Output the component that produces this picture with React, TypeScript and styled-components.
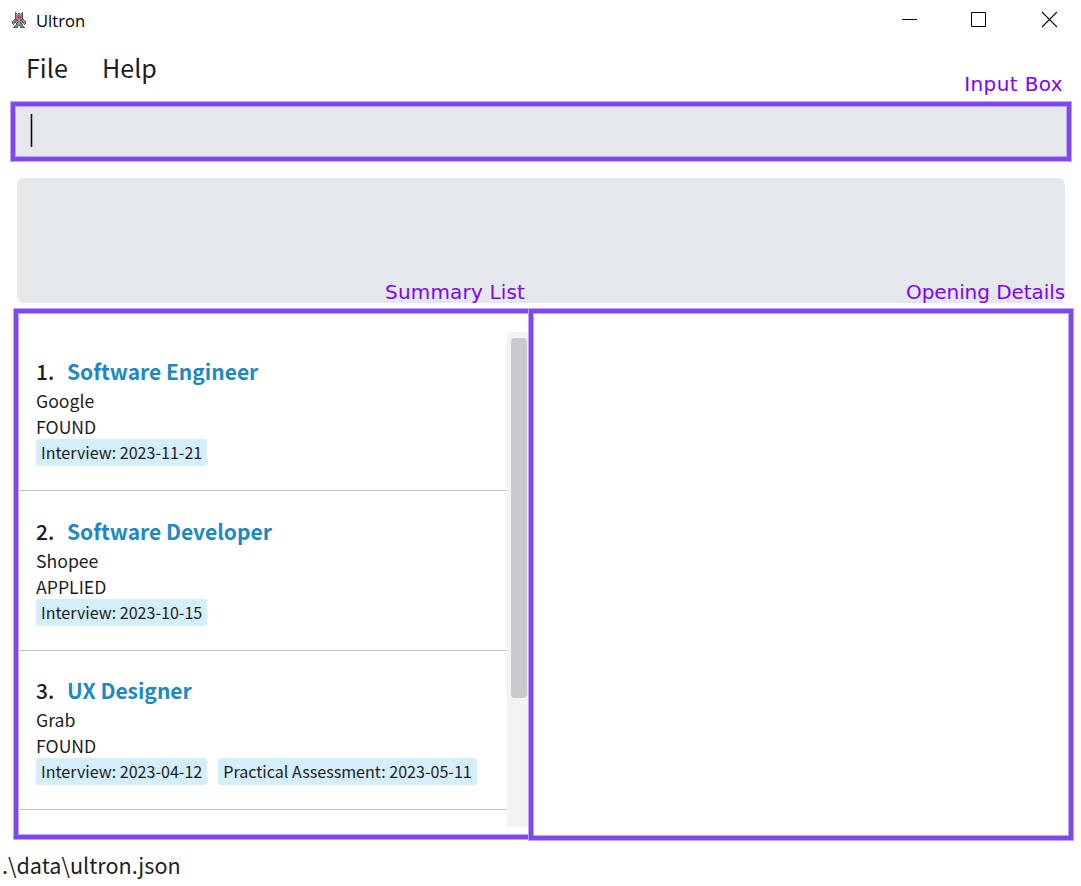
import React from "react";
import styled, { createGlobalStyle } from "styled-components";

const UI = `"Noto Sans CJK SC", "Noto Sans", sans-serif`;
const PURPLE = "#7f48ec";
const PURPLE_SOFT = "#bfa3f5";

const Global = createGlobalStyle`
  * { box-sizing: border-box; }
  body { margin: 0; background: #fff; overflow: hidden; }
`;

const Window = styled.div`
  width: 1081px;
  height: 886px;
  display: flex;
  flex-direction: column;
  background: #fff;
  color: #1d1d1d;
  font-family: ${UI};
  white-space: nowrap;
`;

const TitleBar = styled.header`
  height: 40px;
  display: flex;
  align-items: center;
  padding: 0 24px 0 12px;
`;

const AppName = styled.span`
  margin-left: 10px;
  flex: 1;
  font: 16.6px/24px "Open Sans", sans-serif;
  padding-top: 1px;
  color: #000;
`;

const Controls = styled.div`
  display: flex;
  gap: 54px;
  height: 18px;
`;

const MenuBar = styled.nav`
  height: 61px;
  display: flex;
  align-items: flex-start;
  padding: 9px 18px 0 26px;
`;

const MenuItem = styled.span`
  width: 76px;
  font-size: 25.1px;
  line-height: 37px;
`;

const Label = styled.span<{ $track: number }>`
  font: 20px/26px "DejaVu Sans", sans-serif;
  letter-spacing: ${(p) => p.$track}px;
  color: #8000ff;
`;

const InputLabel = styled(Label)`
  margin: 22px 0 0 auto;
`;

const CommandBox = styled.div`
  margin: 1px 10px 0 11px;
  height: 59px;
  flex: none;
  border: 4px solid ${PURPLE};
  box-shadow: 0 0 0 1px ${PURPLE_SOFT}, inset 0 0 0 1px ${PURPLE_SOFT};
  background: #e4e8eb;
  padding: 8px 0 0 15px;
`;

const Caret = styled.div`
  width: 3px;
  height: 33px;
  background: #000;
  border: solid #a5a8aa;
  border-width: 0 1px;
`;

const ResultBox = styled.div`
  margin: 16.5px 16px 0 16.5px;
  height: 125.5px;
  flex: none;
  border-radius: 7px;
  background: #e4e8eb;
  display: flex;
  justify-content: space-between;
  align-items: flex-end;
  padding-left: 368.5px;

  ${Label} {
    height: 24px;
  }
`;

const Panes = styled.main`
  margin: 6px 8px 0 14px;
  display: flex;
  align-items: flex-start;
`;

const Pane = styled.section<{ $w: number; $h: number }>`
  width: ${(p) => p.$w}px;
  height: ${(p) => p.$h}px;
  flex: none;
  border: 4px solid ${PURPLE};
  box-shadow: 0 0 0 1px ${PURPLE_SOFT}, inset 0 0 0 1px ${PURPLE_SOFT};
`;

const SummaryPane = styled(Pane)`
  display: flex;
  padding-top: 18.3px;
`;

const DetailsPane = styled(Pane)`
  margin-left: -4px;
  background: #fff;
`;

const List = styled.div`
  width: 489px;
  flex: none;
`;

const Card = styled.article`
  height: 159.67px;
  padding: 26.7px 0 0 18px;
  border-bottom: 1px solid #c4c4c4;
`;

const CardTitle = styled.div`
  display: flex;
  height: 30px;
  line-height: 27px;
  font-size: 21px;
`;

const Index = styled.span`
  width: 31px;
  font-weight: 500;
`;

const Role = styled.span`
  color: #1e88c3;
  font-weight: 700;
`;

const Line = styled.div`
  height: 26px;
  line-height: 26px;
  font-size: 17.65px;
`;

const Tags = styled.div`
  display: flex;
  gap: 11px;
  margin-top: -1px;
`;

const Tag = styled.span`
  height: 27px;
  line-height: 26px;
  padding: 0 5px;
  border-radius: 3px;
  background: #d5eefb;
  font-size: 16.08px;
`;

const Track = styled.div`
  width: 21px;
  height: 495px;
  margin-top: 0.7px;
  background: #f3f3f3;
  padding: 6px 1px 0 4px;
`;

const Thumb = styled.div`
  height: 360.5px;
  border-radius: 4px;
  background: #c9cacc;
`;

const StatusBar = styled.footer`
  padding-left: 2px;
  margin-top: 7px;
  font-size: 21.6px;
  line-height: 36px;
`;

const SPRITE = [
  "...k......k...",
  "...kk.kk.kk...",
  "...kggggggk...",
  "...kgrrggrk...",
  "...kgrrrrrk...",
  "...kgrrrrrk...",
  "...kggrrrgk...",
  "..kkkggggkkk..",
  ".kggkkggkkggk.",
  "kggkggggggkggk",
  "kgkkgkggkgkkgk",
  "kgg.kggggk.ggk",
  ".k..kgggggk.k.",
  "...kggkkggk...",
  "..kggk..kggk..",
  ".kkkkk..kkkkk.",
];
const SPRITE_COLORS: Record<string, string> = { k: "#5a5a5a", g: "#929292", r: "#e0474b" };

const RobotIcon = () => (
  <svg width="14" height="16" viewBox="0 0 14 16" shapeRendering="crispEdges">
    {SPRITE.flatMap((row, y) =>
      [...row].map((c, x) =>
        c === "." ? null : <rect key={`${x}-${y}`} x={x} y={y} width="1" height="1" fill={SPRITE_COLORS[c]} />
      )
    )}
  </svg>
);

const openings = [
  { role: "Software Engineer", company: "Google", status: "FOUND", tags: ["Interview: 2023-11-21"] },
  { role: "Software Developer", company: "Shopee", status: "APPLIED", tags: ["Interview: 2023-10-15"] },
  {
    role: "UX Designer",
    company: "Grab",
    status: "FOUND",
    tags: ["Interview: 2023-04-12", "Practical Assessment: 2023-05-11"],
  },
];

export default function App() {
  return (
    <Window>
      <Global />
      <TitleBar>
        <RobotIcon />
        <AppName>Ultron</AppName>
        <Controls>
          <svg width="16" height="17" fill="none" stroke="#000">
            <path d="M1 8.5h15" />
          </svg>
          <svg width="16" height="17" fill="none" stroke="#000">
            <path d="M.5 1.5h14v14H.5z" />
          </svg>
          <svg width="16" height="17" fill="none" stroke="#000" strokeWidth="1.1">
            <path d="M1 1l15 15M16 1L1 16" />
          </svg>
        </Controls>
      </TitleBar>
      <MenuBar>
        <MenuItem>File</MenuItem>
        <MenuItem>Help</MenuItem>
        <InputLabel $track={0.38}>Input Box</InputLabel>
      </MenuBar>
      <CommandBox>
        <Caret />
      </CommandBox>
      <ResultBox>
        <Label $track={0.18}>Summary List</Label>
        <Label $track={-0.07}>Opening Details</Label>
      </ResultBox>
      <Panes>
        <SummaryPane $w={519} $h={530}>
          <List>
            {openings.map((o, i) => (
              <Card key={o.role}>
                <CardTitle>
                  <Index>{i + 1}.</Index>
                  <Role>{o.role}</Role>
                </CardTitle>
                <Line>{o.company}</Line>
                <Line>{o.status}</Line>
                <Tags>
                  {o.tags.map((t) => (
                    <Tag key={t}>{t}</Tag>
                  ))}
                </Tags>
              </Card>
            ))}
          </List>
          <Track>
            <Thumb />
          </Track>
        </SummaryPane>
        <DetailsPane $w={544} $h={531} />
      </Panes>
      <StatusBar>.\data\ultron.json</StatusBar>
    </Window>
  );
}
